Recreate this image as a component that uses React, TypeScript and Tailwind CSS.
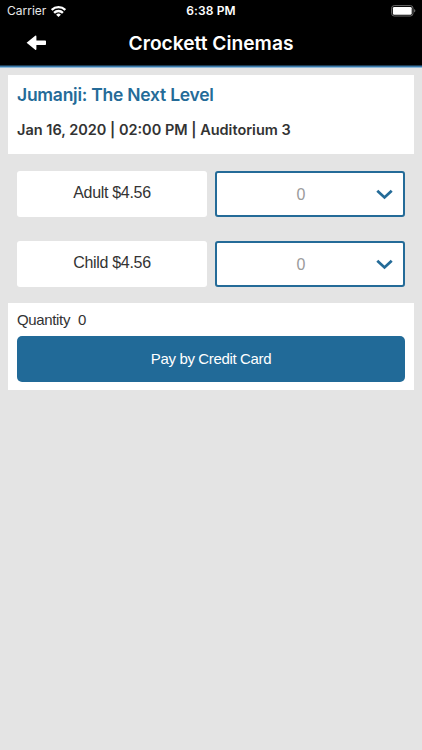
import { useState } from "react";

const TICKETS = [
  { label: "Adult", price: "$4.56" },
  { label: "Child", price: "$4.56" },
];

function WifiIcon() {
  return (
    <svg className="w-[15px] h-[11px]" viewBox="0 0 15 11" fill="none" stroke="white" strokeWidth="2.3">
      <path d="M0.7 4A9.6 9.6 0 0 1 14.3 4" />
      <path d="M3.1 6.9A6 6 0 0 1 11.9 6.9" />
      <path d="M7.5 11L5.1 8.8A3.3 3.3 0 0 1 9.9 8.8Z" fill="white" stroke="none" />
    </svg>
  );
}

function BatteryIcon() {
  return (
    <svg className="w-[25px] h-[12px]" viewBox="0 0 25 12" fill="none">
      <rect x="0.6" y="0.6" width="21.4" height="10.4" rx="2.6" stroke="#6b6b6b" strokeWidth="1" />
      <rect x="1.9" y="1.9" width="18.8" height="7.8" rx="1.3" fill="white" />
      <path d="M23.2 4A2 2 0 0 1 23.2 7.6Z" fill="#7a7a7a" />
    </svg>
  );
}

function StatusBar() {
  return (
    <div className="grid grid-cols-3 items-center h-[22px] text-[12px] leading-[22px]">
      <div className="flex items-center gap-[5px] pl-[7px]">
        <span className="text-[12px] text-[#e8e8e8]">Carrier</span>
        <WifiIcon />
      </div>
      <span className="text-center font-semibold tracking-[0.1px]">6:38 PM</span>
      <div className="flex justify-end pr-[6px]">
        <BatteryIcon />
      </div>
    </div>
  );
}

function NavBar() {
  return (
    <div className="grid grid-cols-[64px_1fr_64px] items-center h-[43px]">
      <button className="pl-[26px] pb-px" aria-label="Back">
        <svg className="w-[21px] h-[16px]" viewBox="0 0 21 16" fill="white">
          <path d="M0.6 7.8L9.2 0.8Q10.4 0.2 10.4 1.6V5.5H19.2Q20 5.5 20 6.3V9.3Q20 10.1 19.2 10.1H10.4V14Q10.4 15.4 9.2 14.8Z" />
        </svg>
      </button>
      <h1 className="pb-px text-center text-[19.2px] font-semibold">Crockett Cinemas</h1>
    </div>
  );
}

function TicketRow({ label, price, count }: { label: string; price: string; count: number }) {
  return (
    <div className="grid grid-cols-2 gap-2 h-[46px] font-['Liberation_Sans',sans-serif]">
      <div className="flex items-center justify-center pb-0.5 bg-white rounded-[3px] text-[16px] tracking-[-0.32px] text-[#333333]">
        {label} {price}
      </div>
      <button className="flex items-center bg-white border-2 border-[#246b98] rounded-[3px]">
        <span className="flex-1 pl-[9px] pt-px text-center text-[16px] text-[#9b9b9b]">{count}</span>
        <svg className="w-[17px] h-[11px] mr-[10px]" viewBox="0 0 17 11" fill="none" stroke="#246b98" strokeWidth="2.8">
          <path d="M1.3 1.7L8.5 8.4L15.7 1.7" />
        </svg>
      </button>
    </div>
  );
}

export default function App() {
  const [quantity] = useState(0);

  return (
    <div className="flex flex-col h-[750px] bg-[#e4e4e4] font-['Inter',sans-serif]">
      <header className="bg-black text-white">
        <StatusBar />
        <NavBar />
        <div className="h-px bg-[#1b3a52]" />
        <div className="h-px bg-[#3a78a8]" />
        <div className="h-px bg-[#8fb9d8]" />
      </header>

      <main className="px-2 pt-[7px]">
        {/* Showing details */}
        <section className="h-[79px] px-[9px] pt-2 bg-white">
          <h2 className="text-[17.5px] leading-6 font-semibold tracking-[-0.25px] text-[#246b98]">
            Jumanji: The Next Level
          </h2>
          <p className="mt-[13px] text-[14.5px] leading-5 font-semibold text-[#333333]">
            Jan 16, 2020 | 02:00 PM | Auditorium 3
          </p>
        </section>

        {/* Ticket types */}
        <section className="flex flex-col gap-6 px-[9px] pt-[17px] pb-4">
          {TICKETS.map((ticket) => (
            <TicketRow key={ticket.label} label={ticket.label} price={ticket.price} count={quantity} />
          ))}
        </section>

        {/* Checkout */}
        <section className="h-[87px] px-[9px] pt-[7px] bg-white font-['Liberation_Sans',sans-serif]">
          <p className="flex gap-2 text-[15px] leading-5 tracking-[-0.35px] text-[#333333]">
            <span>Quantity</span>
            <span>{quantity}</span>
          </p>
          <button className="w-full h-[46px] mt-[6px] pt-px bg-[#216a98] rounded-[5px] text-[15px] tracking-[-0.35px] text-white">
            Pay by Credit Card
          </button>
        </section>
      </main>
    </div>
  );
}
